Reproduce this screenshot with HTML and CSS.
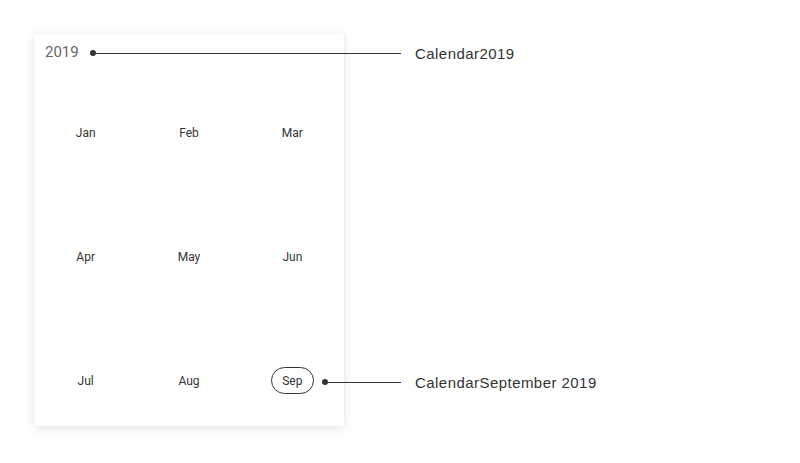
FILE: index.html
```html
<!DOCTYPE html>
<html>
<head>
<meta charset="utf-8">
<link rel="stylesheet" href="styles.css">
</head>
<body>
<div class="stage">
  <div class="card">
    <div class="card-header"><span class="year">2019</span></div>
    <div class="months">
      <div class="month">Jan</div>
      <div class="month">Feb</div>
      <div class="month">Mar</div>
      <div class="month">Apr</div>
      <div class="month">May</div>
      <div class="month">Jun</div>
      <div class="month">Jul</div>
      <div class="month">Aug</div>
      <div class="month"><span class="selected">Sep</span></div>
    </div>
  </div>
  <div class="callout callout-year">
    <span class="dot"></span><span class="line"></span><span class="label">Calendar2019</span>
  </div>
  <div class="callout callout-sep">
    <span class="dot"></span><span class="line"></span><span class="label">CalendarSeptember 2019</span>
  </div>
</div>
</body>
</html>
```
FILE: styles.css
```css
html, body {
  margin: 0;
  padding: 0;
  background: #ffffff;
}
.stage {
  position: relative;
  width: 800px;
  height: 463px;
  padding: 34px 0 0 34px;
  box-sizing: border-box;
}
.card {
  width: 310px;
  height: 392px;
  background: #ffffff;
  box-shadow: 0 2px 10px rgba(0, 0, 0, 0.10), 0 0 2px rgba(0, 0, 0, 0.05);
  display: flex;
  flex-direction: column;
}
.card-header {
  height: 37px;
  display: flex;
  align-items: center;
  padding-left: 11px;
  box-sizing: border-box;
}
.year {
  font-family: Roboto, "Liberation Sans", sans-serif;
  font-size: 15px;
  color: #666666;
  line-height: 1;
}
.months {
  display: grid;
  grid-template-columns: repeat(3, 1fr);
  grid-auto-rows: 27px;
  row-gap: 97px;
  padding-top: 48px;
}
.month {
  display: flex;
  align-items: center;
  justify-content: center;
  font-family: Roboto, "Liberation Sans", sans-serif;
  font-size: 12px;
  color: #333333;
}
.selected {
  display: flex;
  align-items: center;
  justify-content: center;
  width: 43px;
  height: 27px;
  box-sizing: border-box;
  border: 1px solid #333333;
  border-radius: 14px;
}
.callout {
  position: absolute;
  display: flex;
  align-items: center;
  height: 10px;
}
.callout-year {
  left: 90px;
  top: 48px;
}
.callout-sep {
  left: 322px;
  top: 377px;
}
.dot {
  width: 6px;
  height: 6px;
  border-radius: 50%;
  background: #333333;
  flex: none;
}
.line {
  height: 1px;
  background: #333333;
  flex: none;
}
.callout-year .line {
  width: 305px;
}
.callout-sep .line {
  width: 73px;
}
.label {
  margin-left: 14px;
  font-family: "Liberation Sans", Arial, sans-serif;
  font-size: 15px;
  letter-spacing: 0.45px;
  color: #333333;
  white-space: nowrap;
}
```
